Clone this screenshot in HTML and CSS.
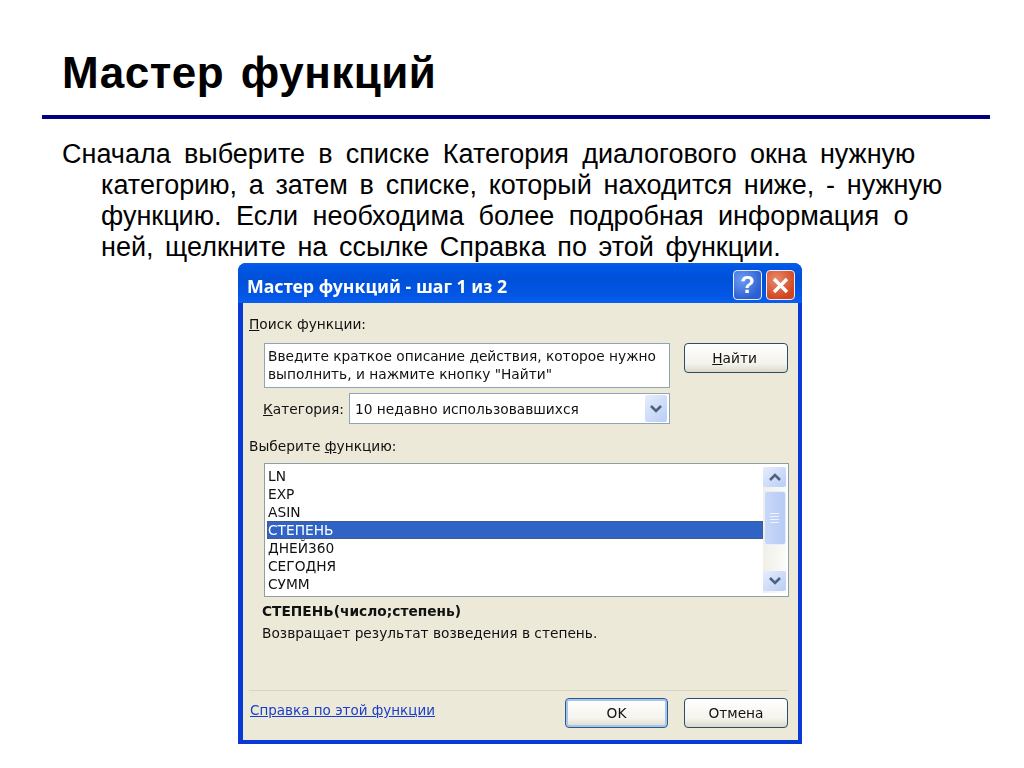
FILE: index.html
```html
<!DOCTYPE html>
<html lang="ru">
<head>
<meta charset="utf-8">
<title>Мастер функций</title>
<link rel="stylesheet" href="styles.css">
</head>
<body>
<main class="slide">
  <h1 class="title">Мастер функций</h1>
  <div class="rule"></div>
  <p class="para">
    <span class="line first">Сначала выберите в списке Категория диалогового окна нужную</span>
    <span class="line l2">категорию, а затем в списке, который находится ниже, - нужную</span>
    <span class="line l3">функцию. Если необходима более подробная информация о</span>
    <span class="line l4">ней, щелкните на ссылке Справка по этой функции.</span>
  </p>
  <section class="dialog">
    <header class="titlebar">
      <span class="wintitle">Мастер функций - шаг 1 из 2</span>
      <span class="winbtns">
        <span class="winbtn help">?</span>
        <span class="winbtn close">
          <svg width="19" height="19" viewBox="0 0 19 19"><path d="M3 3 L16 16 M16 3 L3 16" stroke="#fff" stroke-width="3.4" fill="none"/></svg>
        </span>
      </span>
    </header>
    <div class="body">
      <div class="label search-label"><u>П</u>оиск функции:</div>
      <div class="search-row">
        <div class="textbox">Введите краткое описание действия, которое нужно<br>выполнить, и нажмите кнопку "Найти"</div>
        <div class="btn find"><span><u>Н</u>айти</span></div>
      </div>
      <div class="cat-row">
        <span class="cat-label"><u>К</u>атегория:</span>
        <div class="select">
          <span class="select-text">10 недавно использовавшихся</span>
          <span class="sb-btn drop">
            <svg width="14" height="10" viewBox="0 0 14 10"><path d="M2 2 L7 7 L12 2" stroke="#4d6185" stroke-width="2.6" fill="none"/></svg>
          </span>
        </div>
      </div>
      <div class="label fn-label">Выберите <u>ф</u>ункцию:</div>
      <div class="listbox">
        <ul class="items">
          <li>LN</li>
          <li>EXP</li>
          <li>ASIN</li>
          <li class="sel">СТЕПЕНЬ</li>
          <li>ДНЕЙ360</li>
          <li>СЕГОДНЯ</li>
          <li>СУММ</li>
        </ul>
        <div class="scrollbar">
          <span class="sb-btn arrow">
            <svg width="14" height="10" viewBox="0 0 14 10"><path d="M2 8 L7 3 L12 8" stroke="#4d6185" stroke-width="2.6" fill="none"/></svg>
          </span>
          <span class="thumb"><i></i><i></i><i></i><i></i></span>
          <span class="sb-btn arrow down">
            <svg width="14" height="10" viewBox="0 0 14 10"><path d="M2 2 L7 7 L12 2" stroke="#4d6185" stroke-width="2.6" fill="none"/></svg>
          </span>
        </div>
      </div>
      <div class="signature">СТЕПЕНЬ(число;степень)</div>
      <div class="desc">Возвращает результат возведения в степень.</div>
      <div class="footer">
        <a class="link" href="#">Справка по этой функции</a>
        <div class="btn ok"><span>OK</span></div>
        <div class="btn cancel"><span>Отмена</span></div>
      </div>
    </div>
  </section>
</main>
</body>
</html>
```

FILE: styles.css
```css
* { box-sizing: border-box; }
html, body { margin: 0; padding: 0; background: #fff; }
body { width: 1024px; height: 768px; overflow: hidden; font-family: "Liberation Sans", Arial, sans-serif; color: #000; }
.slide { display: flex; flex-direction: column; height: 768px; }
.title { margin: 50px 0 0 62px; font-size: 44px; line-height: 46px; font-weight: 700; letter-spacing: .5px; word-spacing: 4px; height: 46px; }
.rule { margin: 19px 0 0 42px; width: 948px; height: 4px; background: #000080; }
.para { margin: 20px 0 0 62px; font-size: 27px; line-height: 31px; }
.line { display: block; padding-left: 39px; white-space: nowrap; height: 31px; }
.line.first { padding-left: 0; word-spacing: 5.7px; }
.line.l2 { word-spacing: 4.2px; }
.line.l3 { word-spacing: 7px; }
.line.l4 { word-spacing: 4.1px; }
.dialog { margin: 0 0 0 238px; width: 564px; height: 481px; display: flex; flex-direction: column; background: #0a3ad6; border-radius: 8px 8px 0 0; filter: blur(.35px); font-family: "DejaVu Sans", Tahoma, sans-serif; font-size: 13.75px; color: #111; }
.titlebar { height: 40px; display: flex; align-items: center; justify-content: space-between; padding: 5px 7px 1px 9px; border-radius: 8px 8px 0 0; background: linear-gradient(#0a5fe8 0, #0058e6 8%, #0050d8 40%, #0356e4 80%, #0a5ff0 100%); }
.wintitle { color: #fff; font-family: "Noto Sans", sans-serif; font-weight: 700; font-size: 17.8px; margin-top: 1px; white-space: nowrap; }
.winbtns { display: flex; gap: 4px; }
.winbtn { width: 29px; height: 30px; border: 1.5px solid #e8eefc; border-radius: 4px; display: flex; align-items: center; justify-content: center; }
.help { background: radial-gradient(circle at 30% 30%, #6d9cf2, #2a5ed2 75%); color: #fff; font: 700 24px "Liberation Sans", sans-serif; }
.close { background: radial-gradient(circle at 35% 30%, #ea8a6c, #d2441e 75%); }
.body { flex: 1; margin: 0 4px 4px 5px; background: #ece9d8; padding: 0 10px 0 6px; display: flex; flex-direction: column; }
.label { height: 18px; line-height: 18px; white-space: nowrap; }
.search-label { margin-top: 12px; }
.search-row { display: flex; gap: 14px; margin: 10px 0 0 15px; align-items: flex-start; }
.textbox { width: 406px; height: 45px; background: #fff; border: 1px solid #8ea5b8; padding: 3px 3px; line-height: 18px; white-space: nowrap; }
.btn { border: 1.5px solid #2c4d6b; border-radius: 4px; background: linear-gradient(#fff, #f4f3ec 70%, #dcd8ca); display: flex; align-items: center; justify-content: center; height: 30px; width: 104px; flex: none; }
.find span { margin-right: 3px; }
.cat-row { display: flex; align-items: center; margin: 5px 0 0 14px; height: 31px; }
.cat-label { width: 86px; flex: none; white-space: nowrap; }
.select { width: 321px; height: 31px; background: #fff; border: 1px solid #8ea5b8; display: flex; align-items: center; justify-content: space-between; padding: 0 2px 0 5px; white-space: nowrap; }
.sb-btn { display: flex; align-items: center; justify-content: center; width: 22px; border-radius: 2px; background: linear-gradient(135deg, #e6edfc, #b9cdf6); flex: none; }
.drop { height: 27px; }
.fn-label { margin-top: 13px; }
.listbox { margin: 8px 0 0 15px; width: 525px; height: 134px; display: flex; justify-content: space-between; background: #fff; border: 1px solid #8e9ea8; padding: 3px 2px 3px 2px; }
.items { list-style: none; margin: 0; padding: 0; width: 497px; }
.items li { height: 18px; line-height: 18px; padding-left: 1px; white-space: nowrap; }
.items li.sel { background: #2f63c6; color: #fff; outline: 1px dotted #555; outline-offset: -1px; }
.scrollbar { width: 23px; display: flex; flex-direction: column; align-items: center; background: linear-gradient(90deg, #f0efe8, #fbfbf8); }
.arrow { height: 20px; width: 23px; }
.arrow.down { margin-top: 26px; }
.thumb { margin-top: 4px; width: 22px; height: 54px; border-radius: 3px; background: linear-gradient(90deg, #c9d7f8, #b7cbf6); border: 1px solid #e6edfc; display: flex; flex-direction: column; align-items: center; justify-content: center; gap: 2px; }
.thumb i { display: block; width: 9px; height: 1px; background: #eef3ff; }
.signature { margin: 5px 0 0 13px; font-weight: 700; height: 18px; line-height: 18px; white-space: nowrap; }
.desc { margin: 4px 0 0 13px; height: 18px; line-height: 18px; white-space: nowrap; }
.footer { margin-top: 48px; height: 49px; border-top: 1px solid #d8d4c2; padding-top: 7px; display: flex; align-items: flex-start; gap: 16px; }
.link { color: #1a3ecc; text-decoration: underline; margin: 0 auto 0 1px; line-height: 24px; white-space: nowrap; font-size: 13.5px; }
.ok { border-color: #2c5a8c; box-shadow: inset 0 0 0 2px #a5c4ee; width: 103px; }
```
